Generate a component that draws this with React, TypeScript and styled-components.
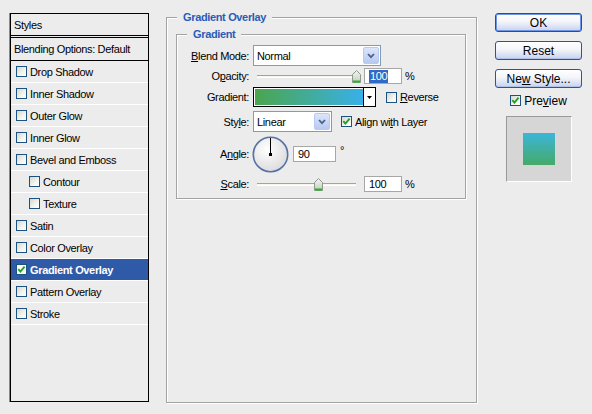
import React from "react";
import styled, { createGlobalStyle } from "styled-components";

const Global = createGlobalStyle`
  html, body { margin: 0; padding: 0; background: #ECECEC; }
  body { font-family: "Liberation Sans", Arial, sans-serif; font-size: 11px; color: #000; }
`;

const Dialog = styled.div`
  width: 592px;
  height: 414px;
  box-sizing: border-box;
  padding: 10px 0 0 10px;
  display: flex;
  align-items: flex-start;
  background: #ECECEC;
  font-family: "Liberation Sans", Arial, sans-serif;
  font-size: 11px;
  letter-spacing: -0.35px;
  overflow: hidden;
`;

/* ---------- left styles list ---------- */
const StylesPanel = styled.div`
  margin-top: 3px;
  width: 139px;
  height: 389px;
  box-sizing: border-box;
  border: 1px solid #000;
  box-shadow: -1px 0 0 #8a8a8a;
  display: flex;
  flex-direction: column;
`;

const PanelHeader = styled.div`
  height: 21px;
  display: flex;
  align-items: center;
  padding-left: 3px;
  border-bottom: 3px double #000;
`;

const BlendRow = styled.div`
  height: 22px;
  display: flex;
  align-items: center;
  padding-left: 3px;
  border-bottom: 1px solid #000;
`;

const StyleItem = styled.div<{ $indent?: boolean; $selected?: boolean }>`
  height: 21px;
  border-bottom: 1px solid #fff;
  display: flex;
  align-items: center;
  gap: 3px;
  padding-left: ${(p) => (p.$indent ? 18 : 5)}px;
  background: ${(p) => (p.$selected ? "#2F5AA7" : "transparent")};
  color: ${(p) => (p.$selected ? "#fff" : "#000")};
  font-weight: ${(p) => (p.$selected ? "bold" : "normal")};
`;

const Box = styled.span<{ $white?: boolean }>`
  width: 11px;
  height: 11px;
  box-sizing: border-box;
  border: 1px solid #1C5180;
  background: ${(p) => (p.$white ? "#fff" : "linear-gradient(135deg, #D6D6D0 0%, #F4F4F0 60%, #FFFFFF 100%)")};
  display: inline-flex;
  align-items: center;
  justify-content: center;
  flex: none;
`;

const Check = ({ checked, white }: { checked?: boolean; white?: boolean }) => (
  <Box $white={white}>
    {checked && (
      <svg width="9" height="9" viewBox="0 0 9 9">
        <polyline points="1.3,4.2 3.4,6.6 7.6,1.6" fill="none" stroke="#21A121" strokeWidth="1.9" />
      </svg>
    )}
  </Box>
);

/* ---------- middle group ---------- */
const Group = styled.fieldset<{ $w: number; $h: number; $ml: number; $mt: number }>`
  margin: ${(p) => p.$mt}px 0 0 ${(p) => p.$ml}px;
  padding: 0;
  min-width: 0;
  box-sizing: border-box;
  width: ${(p) => p.$w}px;
  height: ${(p) => p.$h}px;
  border: 1px solid #A3A3A3;
  box-shadow: 1px 1px 0 #fff, inset 1px 1px 0 #fff;
  flex: none;
`;

const Legend = styled.legend`
  margin-left: 10px;
  padding: 0 6px;
  color: #2A5BB8;
  font-weight: bold;
  line-height: 13px;
  background: #ECECEC;
`;

const Form = styled.div`
  display: flex;
  flex-direction: column;
  padding-top: 4px;
`;

const FormRow = styled.div<{ $h: number; $mt: number }>`
  display: flex;
  align-items: center;
  height: ${(p) => p.$h}px;
  margin-top: ${(p) => p.$mt}px;
`;

const Label = styled.span`
  width: 72px;
  margin-right: 4px;
  text-align: right;
  flex: none;
  white-space: nowrap;
`;

const U = styled.span`
  text-decoration: underline;
`;

const Select = styled.div<{ $w: number }>`
  width: ${(p) => p.$w}px;
  height: 21px;
  box-sizing: border-box;
  border: 1px solid #7F9DB9;
  background: #fff;
  display: flex;
  align-items: center;
  padding: 1px;
  padding-left: 3px;
`;

const SelectText = styled.span`
  flex: 1;
`;

const ArrowBtn = styled.span`
  width: 16px;
  height: 17px;
  box-sizing: border-box;
  border: 1px solid #B9C9EF;
  border-radius: 2px;
  background: linear-gradient(#DCE6FB, #B7C9F2);
  display: flex;
  align-items: center;
  justify-content: center;
`;

const Chevron = () => (
  <svg width="8" height="6" viewBox="0 0 8 6">
    <polyline points="1,1 4,4.2 7,1" fill="none" stroke="#4D6185" strokeWidth="1.8" />
  </svg>
);

const SliderWrap = styled.div`
  position: relative;
  width: 107px;
  height: 16px;
  flex: none;
`;

const Track = styled.div`
  position: absolute;
  left: 4px;
  right: 4px;
  top: 7px;
  height: 3px;
  box-sizing: border-box;
  background: #F6F6EC;
  border-top: 1px solid #A4A49A;
  border-bottom: 1px solid #fff;
`;

const Thumb = styled.svg`
  position: absolute;
  top: 2px;
`;

const Slider = ({ pos }: { pos: number }) => (
  <SliderWrap>
    <Track />
    <Thumb width="9" height="13" viewBox="0 0 9 13" style={{ left: pos }}>
      <defs>
        <linearGradient id="tg" x1="0" y1="0" x2="0" y2="1">
          <stop offset="0" stopColor="#F4F6F2" />
          <stop offset="1" stopColor="#C3CCC0" />
        </linearGradient>
      </defs>
      <path d="M0.5 4.5 L4.5 0.5 L8.5 4.5 V12.5 H0.5 Z" fill="url(#tg)" stroke="#8C998C" />
      <rect x="1" y="10.5" width="7" height="2" fill="#26B526" />
    </Thumb>
  </SliderWrap>
);

const Field = styled.div<{ $w: number; $ml: number }>`
  width: ${(p) => p.$w}px;
  height: 16px;
  margin-left: ${(p) => p.$ml}px;
  box-sizing: border-box;
  border: 1px solid #A7A7A7;
  background: #fff;
  display: flex;
  align-items: center;
  padding-left: 4px;
  flex: none;
`;

const Sel = styled.span`
  background: #316AC5;
  color: #fff;
  padding: 0 1px;
  line-height: 13px;
`;

const Unit = styled.span`
  margin-left: 3px;
`;

const Deg = styled.span`
  margin-left: 4px;
  align-self: flex-start;
  margin-top: 9px;
`;

const Swatch = styled.div`
  width: 123px;
  height: 20px;
  box-sizing: border-box;
  border: 1px solid #000;
  display: flex;
  flex: none;
`;

const SwatchFill = styled.div`
  flex: 1;
  border: 1px solid #fff;
  border-right: none;
  background: linear-gradient(to right, #4AA54E, #42AC9A 50%, #38B0EA);
`;

const SwatchArrow = styled.div`
  width: 11px;
  border-left: 1px solid #000;
  background: #fff;
  display: flex;
  align-items: center;
  justify-content: center;
`;

const CheckLabel = styled.span<{ $ml: number }>`
  display: flex;
  align-items: center;
  gap: 3px;
  margin-left: ${(p) => p.$ml}px;
`;

/* ---------- right column ---------- */
const Side = styled.div`
  margin: 3px 0 0 18px;
  width: 87px;
  display: flex;
  flex-direction: column;
  align-items: center;
  gap: 9px;
`;

const Button = styled.div<{ $default?: boolean }>`
  width: 87px;
  height: 19px;
  box-sizing: border-box;
  border: 1px solid ${(p) => (p.$default ? "#1E4DB0" : "#2B52A8")};
  border-radius: 3px;
  background: linear-gradient(#FFFFFF 0%, #F3F5FA 45%, #C6D2EE 100%);
  box-shadow: ${(p) => (p.$default ? "inset 0 0 0 1px #6F95E6" : "inset 0 -1px 0 #B2C2E6")};
  display: flex;
  align-items: center;
  justify-content: center;
  font-size: 12px;
  letter-spacing: 0;
`;

const PreviewRow = styled.div`
  display: flex;
  align-items: center;
  gap: 3px;
  height: 13px;
  font-size: 12px;
  letter-spacing: 0;
  margin-top: -3px;
`;

const PreviewBox = styled.div`
  width: 66px;
  height: 66px;
  box-sizing: border-box;
  background: #D6D6D6;
  border-top: 1px solid #9A9A9A;
  border-left: 1px solid #9A9A9A;
  border-bottom: 1px solid #fff;
  border-right: 1px solid #fff;
  display: flex;
  align-items: center;
  justify-content: center;
`;

const PreviewSquare = styled.div`
  width: 32px;
  height: 32px;
  background: linear-gradient(#3CB6DA, #45AA68);
`;

const items: { label: string; indent?: boolean; checked?: boolean; selected?: boolean }[] = [
  { label: "Drop Shadow" },
  { label: "Inner Shadow" },
  { label: "Outer Glow" },
  { label: "Inner Glow" },
  { label: "Bevel and Emboss" },
  { label: "Contour", indent: true },
  { label: "Texture", indent: true },
  { label: "Satin" },
  { label: "Color Overlay" },
  { label: "Gradient Overlay", checked: true, selected: true },
  { label: "Pattern Overlay" },
  { label: "Stroke" },
];

export default function App() {
  return (
    <>
      <Global />
      <Dialog>
        <StylesPanel>
          <PanelHeader>Styles</PanelHeader>
          <BlendRow>Blending Options: Default</BlendRow>
          {items.map((it) => (
            <StyleItem key={it.label} $indent={it.indent} $selected={it.selected}>
              <Check checked={it.checked} white={it.selected} />
              {it.label}
            </StyleItem>
          ))}
        </StylesPanel>

        <Group $w={311} $h={392} $ml={17} $mt={1}>
          <Legend>Gradient Overlay</Legend>
          <Group $w={290} $h={171} $ml={9} $mt={4}>
            <Legend>Gradient</Legend>
            <Form>
              <FormRow $h={21} $mt={0}>
                <Label>
                  <U>B</U>lend Mode:
                </Label>
                <Select $w={128}>
                  <SelectText>Normal</SelectText>
                  <ArrowBtn>
                    <Chevron />
                  </ArrowBtn>
                </Select>
              </FormRow>
              <FormRow $h={16} $mt={2}>
                <Label>
                  O<U>p</U>acity:
                </Label>
                <Slider pos={99} />
                <Field $w={38} $ml={4}>
                  <Sel>100</Sel>
                </Field>
                <Unit>%</Unit>
              </FormRow>
              <FormRow $h={20} $mt={3}>
                <Label>Gradient:</Label>
                <Swatch>
                  <SwatchFill />
                  <SwatchArrow>
                    <svg width="5" height="3" viewBox="0 0 5 3">
                      <polygon points="0,0 5,0 2.5,3" fill="#000" />
                    </svg>
                  </SwatchArrow>
                </Swatch>
                <CheckLabel $ml={10}>
                  <Check />
                  <span>
                    <U>R</U>everse
                  </span>
                </CheckLabel>
              </FormRow>
              <FormRow $h={21} $mt={4}>
                <Label>
                  Sty<U>l</U>e:
                </Label>
                <Select $w={79}>
                  <SelectText>Linear</SelectText>
                  <ArrowBtn>
                    <Chevron />
                  </ArrowBtn>
                </Select>
                <CheckLabel $ml={9}>
                  <Check checked />
                  <span>
                    Align wi<U>t</U>h Layer
                  </span>
                </CheckLabel>
              </FormRow>
              <FormRow $h={38} $mt={3}>
                <Label>
                  A<U>n</U>gle:
                </Label>
                <svg width="37" height="37" viewBox="0 0 37 37" style={{ marginLeft: -1, flex: "none" }}>
                  <defs>
                    <radialGradient id="dg" cx="0.4" cy="0.35" r="0.7">
                      <stop offset="0" stopColor="#FFFFFF" />
                      <stop offset="1" stopColor="#DADADA" />
                    </radialGradient>
                  </defs>
                  <circle cx="18.5" cy="18.5" r="17.2" fill="url(#dg)" stroke="#5670A8" strokeWidth="1.6" />
                  <line x1="18.5" y1="18.5" x2="18.5" y2="2" stroke="#000" strokeWidth="1" />
                  <rect x="17" y="17" width="3" height="3" fill="#000" />
                </svg>
                <Field $w={43} $ml={4}>
                  90
                </Field>
                <Deg>°</Deg>
              </FormRow>
              <FormRow $h={16} $mt={3}>
                <Label>
                  <U>S</U>cale:
                </Label>
                <Slider pos={61} />
                <Field $w={38} $ml={4}>
                  100
                </Field>
                <Unit>%</Unit>
              </FormRow>
            </Form>
          </Group>
        </Group>

        <Side>
          <Button $default>OK</Button>
          <Button>Reset</Button>
          <Button>
            Ne<U>w</U>&nbsp;Style...
          </Button>
          <PreviewRow>
            <Check checked />
            <span>
              Pre<U>v</U>iew
            </span>
          </PreviewRow>
          <PreviewBox>
            <PreviewSquare />
          </PreviewBox>
        </Side>
      </Dialog>
    </>
  );
}
